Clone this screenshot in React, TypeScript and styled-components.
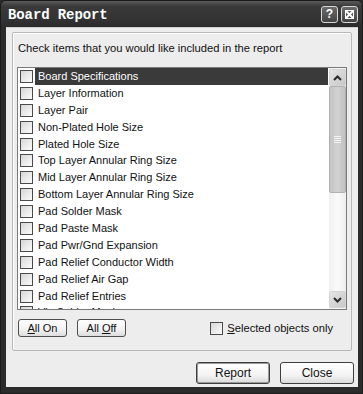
import React from "react";
import styled, { createGlobalStyle } from "styled-components";

const GlobalStyle = createGlobalStyle`
  html, body {
    margin: 0;
    padding: 0;
    background: #2a2a2a;
  }
`;

const uiFont = `"Liberation Sans", Arial, sans-serif`;

const items = [
  "Board Specifications",
  "Layer Information",
  "Layer Pair",
  "Non-Plated Hole Size",
  "Plated Hole Size",
  "Top Layer Annular Ring Size",
  "Mid Layer Annular Ring Size",
  "Bottom Layer Annular Ring Size",
  "Pad Solder Mask",
  "Pad Paste Mask",
  "Pad Pwr/Gnd Expansion",
  "Pad Relief Conductor Width",
  "Pad Relief Air Gap",
  "Pad Relief Entries",
  "Via Solder Mask",
];

const Window = styled.div`
  width: 363px;
  height: 394px;
  display: flex;
  flex-direction: column;
  background: #2b2b2b;
  box-sizing: border-box;
  border: 1px solid #1a1a1a;
  border-radius: 6px 6px 0 0;
  overflow: hidden;
`;

const TitleBar = styled.div`
  height: 26px;
  display: flex;
  align-items: center;
  padding: 0 4px 0 7px;
  background: linear-gradient(#5a5a5a 0%, #3a3a3a 20%, #333333 70%, #2b2b2b 100%);
`;

const Title = styled.div`
  flex: 1;
  color: #ffffff;
  font-family: "Liberation Mono", "Courier New", monospace;
  font-weight: bold;
  font-size: 14px;
  letter-spacing: -0.1px;
  padding-top: 1px;
`;

const CaptionButton = styled.div`
  width: 15px;
  height: 15px;
  margin-left: 3px;
  border: 1px solid #d8d8d8;
  border-radius: 3px;
  background: linear-gradient(#6a6a6a, #444444);
  color: #ffffff;
  display: flex;
  align-items: center;
  justify-content: center;
  font-family: ${uiFont};
  font-weight: bold;
  font-size: 12px;
`;

const Client = styled.div`
  flex: 1;
  margin: 0 4px 6px 5px;
  background: #ededed;
  display: flex;
  flex-direction: column;
  border-top: 1px solid #d0d0d0;
`;

const GroupBox = styled.div`
  margin: 4px 6px 0 6px;
  border: 1px solid #b8b8b8;
  box-shadow: inset 1px 1px 0 #ffffff;
  border-radius: 2px;
  padding: 0 4px 13px 4px;
  display: flex;
  flex-direction: column;
`;

const Label = styled.div`
  height: 34px;
  line-height: 30px;
  padding-left: 1px;
  font-family: ${uiFont};
  font-size: 11.2px;
  color: #111111;
`;

const ListBox = styled.div`
  height: 243px;
  box-sizing: border-box;
  border: 1px solid #7a7a7a;
  background: #ffffff;
  display: flex;
`;

const Items = styled.div`
  flex: 1;
  overflow: hidden;
  padding-left: 2px;
`;

const Row = styled.div`
  height: 16.9px;
  display: flex;
  align-items: center;
`;

const Check = styled.span`
  width: 11px;
  height: 11px;
  flex: none;
  border: 1px solid #4a4a4a;
  background: linear-gradient(135deg, #d6d6d6 0%, #ededed 60%, #fbfbfb 100%);
`;

const ItemText = styled.span<{ $selected?: boolean }>`
  flex: 1;
  margin-left: 2px;
  height: 17px;
  line-height: 17px;
  padding-left: 3px;
  font-family: ${uiFont};
  font-size: 11px;
  white-space: nowrap;
  color: ${(p) => (p.$selected ? "#ffffff" : "#111111")};
  background: ${(p) => (p.$selected ? "#3a3a3a" : "transparent")};
`;

const ScrollBar = styled.div`
  width: 17px;
  padding: 1px 0;
  margin-left: 1px;
  display: flex;
  flex-direction: column;
  background: linear-gradient(90deg, #f0f0f0, #fafafa 50%, #eeeeee);
`;

const ScrollButton = styled.div`
  height: 15px;
  flex: none;
  box-sizing: content-box;
  border: 1px solid #d4d4d4;
  border-radius: 2px;
  background: linear-gradient(135deg, #e4e4e4, #c8c8c8);
  display: flex;
  align-items: center;
  justify-content: center;
`;

const Thumb = styled.div`
  height: 107px;
  box-sizing: border-box;
  border: 1px solid #b0b0b0;
  border-radius: 2px;
  background: linear-gradient(90deg, #c4c4c4, #d2d2d2 50%, #c0c0c0);
  display: flex;
  align-items: center;
  justify-content: center;
`;

const Track = styled.div`
  flex: 1;
`;

const Controls = styled.div`
  margin-top: 9px;
  height: 18px;
  display: flex;
  align-items: center;
  padding-left: 1px;
  gap: 10px;
`;

const SmallButton = styled.div`
  width: 47px;
  height: 16px;
  border: 1px solid #4e4e4e;
  border-radius: 3px;
  background: linear-gradient(#ffffff, #f2f2f2 60%, #dcdcdc);
  display: flex;
  align-items: center;
  justify-content: center;
  font-family: ${uiFont};
  font-size: 11px;
  color: #111111;
`;

const Option = styled.label`
  margin-left: auto;
  margin-right: 14px;
  display: flex;
  align-items: center;
  gap: 4px;
  font-family: ${uiFont};
  font-size: 11.2px;
  color: #111111;
`;

const ButtonRow = styled.div`
  margin-top: 11px;
  padding-right: 4px;
  display: flex;
  justify-content: flex-end;
  gap: 10px;
`;

const DialogButton = styled.div<{ $default?: boolean }>`
  width: 72px;
  height: 20px;
  border: 1px solid #3e3e3e;
  border-radius: 3px;
  background: linear-gradient(#ffffff, #f4f4f4 60%, #dadada);
  box-shadow: ${(p) => (p.$default ? "inset 0 0 0 1px #9a9a9a" : "none")};
  display: flex;
  align-items: center;
  justify-content: center;
  font-family: ${uiFont};
  font-size: 12px;
  color: #111111;
`;

const Chevron = ({ up }: { up?: boolean }) => (
  <svg width="9" height="6" viewBox="0 0 9 6">
    <path
      d={up ? "M1 5 L4.5 1.5 L8 5" : "M1 1 L4.5 4.5 L8 1"}
      fill="none"
      stroke="#2a2a2a"
      strokeWidth="2"
    />
  </svg>
);

const Grip = () => (
  <svg width="7" height="8" viewBox="0 0 7 8">
    {[0.5, 2.5, 4.5, 6.5].map((y) => (
      <line key={y} x1="0" y1={y} x2="7" y2={y} stroke="#f4f4f4" strokeWidth="1" />
    ))}
  </svg>
);

export default function App() {
  return (
    <>
      <GlobalStyle />
      <Window>
        <TitleBar>
          <Title>Board Report</Title>
          <CaptionButton>?</CaptionButton>
          <CaptionButton>
            <svg width="9" height="9" viewBox="0 0 9 9">
              <rect x="0.5" y="0.5" width="8" height="8" fill="none" stroke="#fff" />
              <path d="M1 1 L8 8 M8 1 L1 8" stroke="#fff" strokeWidth="2" />
            </svg>
          </CaptionButton>
        </TitleBar>
        <Client>
          <GroupBox>
            <Label>Check items that you would like included in the report</Label>
            <ListBox>
              <Items>
                {items.map((item, i) => (
                  <Row key={item}>
                    <Check />
                    <ItemText $selected={i === 0}>{item}</ItemText>
                  </Row>
                ))}
              </Items>
              <ScrollBar>
                <ScrollButton>
                  <Chevron up />
                </ScrollButton>
                <Thumb>
                  <Grip />
                </Thumb>
                <Track />
                <ScrollButton>
                  <Chevron />
                </ScrollButton>
              </ScrollBar>
            </ListBox>
            <Controls>
              <SmallButton>
                <u>A</u>ll On
              </SmallButton>
              <SmallButton>
                All&nbsp;<u>O</u>ff
              </SmallButton>
              <Option>
                <Check />
                <span>
                  <u>S</u>elected objects only
                </span>
              </Option>
            </Controls>
          </GroupBox>
          <ButtonRow>
            <DialogButton $default>Report</DialogButton>
            <DialogButton>Close</DialogButton>
          </ButtonRow>
        </Client>
      </Window>
    </>
  );
}
